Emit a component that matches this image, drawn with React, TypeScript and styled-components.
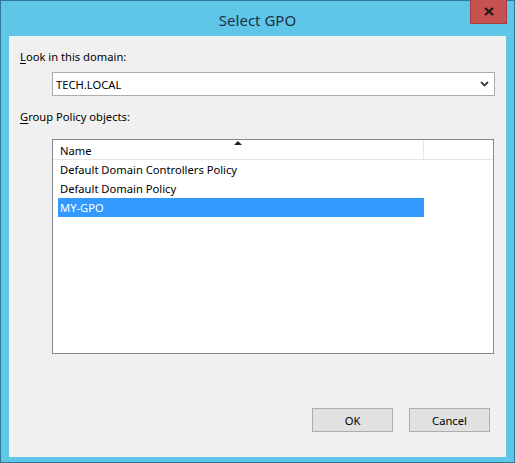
import React from "react";
import styled, { createGlobalStyle } from "styled-components";

const GlobalStyle = createGlobalStyle`
  html, body {
    margin: 0;
    padding: 0;
    background: #5fc6e8;
  }
  body {
    font-family: "Noto Sans", "Open Sans", sans-serif;
    font-size: 11.2px;
    color: #000;
  }
`;

const Window = styled.div`
  box-sizing: border-box;
  width: 515px;
  height: 463px;
  display: flex;
  flex-direction: column;
  background: #5fc6e8;
  border: 1px solid #2f7896;
`;

const TitleBar = styled.div`
  height: 35px;
  display: grid;
  grid-template-columns: 1fr auto 1fr;
  align-items: start;
`;

const Title = styled.div`
  grid-column: 2;
  margin-top: 9px;
  font-size: 15px;
  line-height: 20px;
  color: #1d3247;
`;

const CloseButton = styled.div`
  grid-column: 3;
  justify-self: end;
  box-sizing: border-box;
  width: 37px;
  height: 24px;
  margin-right: 7px;
  margin-top: -1px;
  background: #c75050;
  border: 1px solid #9e3f3f;
  border-top: none;
  display: flex;
  align-items: center;
  justify-content: center;
`;

const Client = styled.div`
  flex: 1;
  margin: 0 8px 5px 8px;
  background: #f0f0f0;
  padding: 13px 11px 0 11px;
  display: flex;
  flex-direction: column;
`;

const Label = styled.div`
  line-height: 16px;
  height: 16px;
  margin-top: ${(p: { $gap: number }) => p.$gap}px;
`;

const AccessKey = styled.span`
  text-decoration: underline;
  text-underline-offset: 2px;
`;

const Combo = styled.div`
  box-sizing: border-box;
  margin: 7px 0 0 32px;
  height: 24px;
  background: #fff;
  border: 1px solid #adadad;
  display: flex;
  align-items: center;
  justify-content: space-between;
  padding: 0 5px 0 3px;
`;

const ListBox = styled.div`
  box-sizing: border-box;
  margin: 14px 1px 0 32px;
  height: 215px;
  background: #fff;
  border: 1px solid #828790;
  display: flex;
  flex-direction: column;
`;

const Header = styled.div`
  height: 19px;
  display: flex;
  border-bottom: 1px solid #e5e5e5;
`;

const HeaderCell = styled.div`
  position: relative;
  box-sizing: border-box;
  width: 371px;
  border-right: 1px solid #e5e5e5;
  padding: 3px 0 0 7px;
  line-height: 16px;
`;

const SortArrow = styled.svg`
  position: absolute;
  top: 1px;
  left: 181px;
`;

const Rows = styled.div`
  padding-left: 5px;
  display: flex;
  flex-direction: column;
`;

const Row = styled.div<{ $selected?: boolean }>`
  width: 366px;
  height: 19px;
  line-height: 19px;
  padding-left: 2px;
  box-sizing: border-box;
  background: ${(p) => (p.$selected ? "#3399ff" : "transparent")};
  color: ${(p) => (p.$selected ? "#fff" : "#000")};
`;

const ButtonRow = styled.div`
  margin: 54px 5px 0 0;
  display: flex;
  justify-content: flex-end;
  gap: 16px;
`;

const Button = styled.div`
  box-sizing: border-box;
  width: 81px;
  height: 24px;
  background: #e1e1e1;
  border: 1px solid #adadad;
  display: flex;
  align-items: center;
  justify-content: center;
`;

const policies = [
  "Default Domain Controllers Policy",
  "Default Domain Policy",
  "MY-GPO",
];

export default function App() {
  return (
    <>
      <GlobalStyle />
      <Window>
        <TitleBar>
          <Title>Select GPO</Title>
          <CloseButton>
            <svg width="10" height="9" viewBox="0 0 10 9">
              <path d="M1 1 L9 8 M9 1 L1 8" stroke="#1a1a1a" strokeWidth="2.2" />
            </svg>
          </CloseButton>
        </TitleBar>
        <Client>
          <Label $gap={0}>
            <AccessKey>L</AccessKey>ook in this domain:
          </Label>
          <Combo>
            <span>TECH.LOCAL</span>
            <svg width="9" height="6" viewBox="0 0 9 6">
              <path d="M1 1 L4.5 4.5 L8 1" stroke="#3c3c3c" strokeWidth="1.8" fill="none" />
            </svg>
          </Combo>
          <Label $gap={13}>
            <AccessKey>G</AccessKey>roup Policy objects:
          </Label>
          <ListBox>
            <Header>
              <HeaderCell>
                Name
                <SortArrow width="8" height="4" viewBox="0 0 8 4">
                  <path d="M0 4 L4 0 L8 4 Z" fill="#222" />
                </SortArrow>
              </HeaderCell>
            </Header>
            <Rows>
              {policies.map((name) => (
                <Row key={name} $selected={name === "MY-GPO"}>
                  {name}
                </Row>
              ))}
            </Rows>
          </ListBox>
          <ButtonRow>
            <Button>OK</Button>
            <Button>Cancel</Button>
          </ButtonRow>
        </Client>
      </Window>
    </>
  );
}
